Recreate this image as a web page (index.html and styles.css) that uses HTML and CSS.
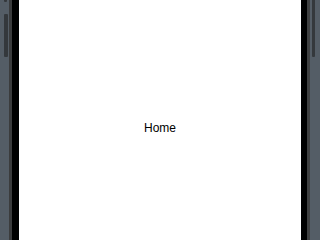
FILE: index.html
```html
<!DOCTYPE html>
<html>
<head>
<meta charset="utf-8">
<link rel="stylesheet" href="styles.css">
</head>
<body>
<div class="stage">
  <div class="device">
    <span class="btn btn-l1"></span>
    <span class="btn btn-l2"></span>
    <span class="btn btn-r1"></span>
    <div class="bezel">
      <div class="screen">
        <div class="title">Home</div>
      </div>
    </div>
  </div>
</div>
</body>
</html>
```
FILE: styles.css
```css
html, body {
  margin: 0;
  padding: 0;
  height: 100%;
  background: #545d66;
  overflow: hidden;
}
.stage {
  width: 320px;
  height: 100%;
  min-height: 214px;
  display: flex;
  padding-left: 9px;
  box-sizing: border-box;
}
.device {
  position: relative;
  width: 301px;
  border-left: 3px solid #3b3c3d;
  border-right: 3px solid #3f4041;
  box-sizing: border-box;
  display: flex;
}
.bezel {
  flex: 1;
  background: #000;
  padding: 0 6px 0 7px;
  display: flex;
}
.screen {
  flex: 1;
  background: #fff;
  display: flex;
  flex-direction: column;
  align-items: center;
  padding-top: 121px;
}
.title {
  font-family: "Liberation Sans", Arial, sans-serif;
  font-size: 12px;
  line-height: 14px;
  color: #000;
}
.btn {
  position: absolute;
  background: #34383c;
  border-radius: 1px;
}
.btn-l1 {
  left: -8px;
  top: -4px;
  width: 3px;
  height: 6px;
}
.btn-l2 {
  left: -8px;
  top: 14px;
  width: 4px;
  height: 43px;
}
.btn-r1 {
  right: -8px;
  top: -4px;
  width: 3px;
  height: 61px;
}
```
